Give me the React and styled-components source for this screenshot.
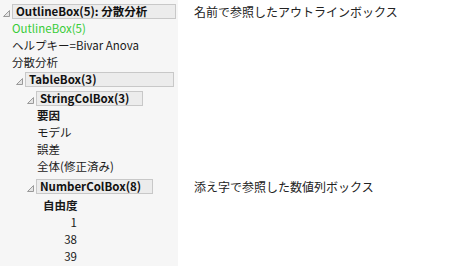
import React from "react";
import styled, { createGlobalStyle } from "styled-components";

const GlobalStyle = createGlobalStyle`
  html, body {
    margin: 0;
    padding: 0;
    background: #ffffff;
  }
  body {
    font-family: "Noto Sans CJK JP", "Noto Sans", sans-serif;
    font-size: 11.5px;
    color: #1a1a1a;
  }
`;

// 左の灰色パネルは背景のグラデーションで描く
const Page = styled.div`
  width: 449px;
  height: 266px;
  box-sizing: border-box;
  padding-top: 4px;
  overflow: hidden;
  background: linear-gradient(to right, #f6f6f6 178px, #ffffff 178px);
`;

const Line = styled.div`
  display: flex;
  align-items: center;
  height: ${(p) => p.$h || 17}px;
  margin-top: ${(p) => p.$gap || 0}px;
`;

const Left = styled.div`
  width: 178px;
  height: 100%;
  flex: none;
  display: flex;
  align-items: center;
  box-sizing: border-box;
  padding-left: ${(p) => p.$indent || 0}px;
`;

const Note = styled.div`
  padding-left: 16px;
  font-size: 12px;
  line-height: 15px;
  color: #222;
  white-space: nowrap;
`;

const Header = styled.div`
  width: ${(p) => p.$w}px;
  height: 15px;
  box-sizing: border-box;
  border: 1px solid #c8c8c8;
  background: #ececec;
  font-weight: bold;
  font-size: 11.5px;
  line-height: 13px;
  padding-left: 3px;
  color: #111;
  white-space: nowrap;
`;

const Twisty = styled.svg`
  width: 7px;
  height: 7px;
  margin: 3px 2px 0 0;
  flex: none;
`;

const Text = styled.span`
  color: ${(p) => (p.$green ? "#38cc38" : "#1a1a1a")};
  font-weight: ${(p) => (p.$bold ? "bold" : "normal")};
  white-space: nowrap;
`;

const NumCell = styled.span`
  width: 34px;
  flex: none;
  text-align: right;
  white-space: nowrap;
  font-weight: ${(p) => (p.$bold ? "bold" : "normal")};
`;

const Disclosure = () => (
  <Twisty viewBox="0 0 7 7">
    <polygon points="6.5,0.5 6.5,6.5 0.5,6.5" fill="#e4e4e4" stroke="#9a9a9a" strokeWidth="1" />
  </Twisty>
);

const HeaderLine = ({ indent, w, gap, children, note }) => (
  <Line $gap={gap} $h={15}>
    <Left $indent={indent}>
      <Disclosure />
      <Header $w={w}>{children}</Header>
    </Left>
    {note && <Note>{note}</Note>}
  </Line>
);

const App = () => {
  const names = ["モデル", "誤差", "全体(修正済み)"];
  const dfs = [1, 38, 39];
  return (
    <>
      <GlobalStyle />
      <Page>
        <HeaderLine indent={3} w={164} note="名前で参照したアウトラインボックス">
          OutlineBox(5): 分散分析
        </HeaderLine>
        <Line>
          <Left $indent={12}>
            <Text $green>OutlineBox(5)</Text>
          </Left>
        </Line>
        <Line>
          <Left $indent={12}>
            <Text>ヘルプキー=Bivar Anova</Text>
          </Left>
        </Line>
        <Line>
          <Left $indent={12}>
            <Text>分散分析</Text>
          </Left>
        </Line>
        <HeaderLine indent={16} w={149} gap={2}>
          TableBox(3)
        </HeaderLine>
        <HeaderLine indent={27} w={107} gap={4}>
          StringColBox(3)
        </HeaderLine>
        <Line>
          <Left $indent={37}>
            <Text $bold>要因</Text>
          </Left>
        </Line>
        {names.map((n) => (
          <Line key={n}>
            <Left $indent={37}>
              <Text>{n}</Text>
            </Left>
          </Line>
        ))}
        <HeaderLine indent={27} w={117} gap={5} note="添え字で参照した数値列ボックス">
          NumberColBox(8)
        </HeaderLine>
        <Line $gap={2}>
          <Left $indent={43}>
            <NumCell $bold>自由度</NumCell>
          </Left>
        </Line>
        {dfs.map((d) => (
          <Line key={d}>
            <Left $indent={43}>
              <NumCell>{d}</NumCell>
            </Left>
          </Line>
        ))}
      </Page>
    </>
  );
};

export default App;
